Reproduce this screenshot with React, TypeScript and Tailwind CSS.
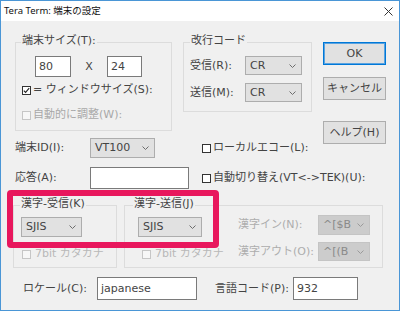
import React from "react";

const Chevron = ({ color = "#6d6d6d" }: { color?: string }) => (
  <svg width="7" height="4" viewBox="0 0 7 4" className="shrink-0">
    <polyline points="0.5,0.5 3.5,3.5 6.5,0.5" fill="none" stroke={color} strokeWidth="1" />
  </svg>
);

const Select = ({ text, cls, disabled }: { text: string; cls: string; disabled?: boolean }) => (
  <div
    className={
      "flex items-center justify-between shrink-0 border pl-[4px] pr-[5px] " +
      (disabled ? "border-[#c4c4c4] bg-[#cccccc] text-[#8a8a8a] " : "border-[#adadad] bg-[#e1e1e1] text-[#444] ") +
      cls
    }
  >
    <span className="leading-[14px]">{text}</span>
    <Chevron color={disabled ? "#9a9a9a" : "#6d6d6d"} />
  </div>
);

const Input = ({ text, cls }: { text: string; cls: string }) => (
  <div className={"flex items-center shrink-0 border border-[#7a7a7a] bg-white pl-[3px] " + cls}>
    <span className="leading-[14px]">{text}</span>
  </div>
);

const Check = ({ checked, disabled }: { checked?: boolean; disabled?: boolean }) => (
  <span
    className={
      "inline-flex items-center justify-center shrink-0 w-[9px] h-[9px] border " +
      (disabled ? "border-[#c6c6c6] bg-[#f7f7f7]" : "border-[#333333] bg-white")
    }
  >
    {checked && (
      <svg width="7" height="7" viewBox="0 0 7 7">
        <polyline points="0.8,3.6 2.6,5.4 6.2,1.2" fill="none" stroke="#222" strokeWidth="1.1" />
      </svg>
    )}
  </span>
);

const Button = ({ text, cls }: { text: string; cls: string }) => (
  <div className={"flex items-center justify-center shrink-0 h-[23px] w-[63px] bg-[#e1e1e1] " + cls}>
    <span className="leading-[14px]">{text}</span>
  </div>
);

export default function App() {
  return (
    <div className="relative w-[400px] h-[311px] overflow-hidden border border-[#4a96d6] bg-[#f0f0f0] flex flex-col font-['DejaVu_Sans','Noto_Sans_CJK_JP',sans-serif] font-normal text-[11px] text-[#444]">
      {/* Title bar */}
      <div className="h-[20px] shrink-0 bg-white flex items-center justify-between pl-[3px] pr-[6px]">
        <span className="text-[9.5px] leading-[12px] text-[#111] font-['Noto_Sans','Noto_Sans_CJK_JP',sans-serif]">Tera Term: 端末の設定</span>
        <svg width="9" height="9" viewBox="0 0 9 9">
          <path d="M0.5 0.5 L8.5 8.5 M8.5 0.5 L0.5 8.5" stroke="#333" strokeWidth="1" />
        </svg>
      </div>

      {/* Top section */}
      <div className="flex pl-[14px]">
        <div className="flex flex-col w-[308px] shrink-0">
          <div className="flex mt-[21px]">
            {/* 端末サイズ group */}
            <div className="flex flex-col w-[157px] h-[89px] shrink-0 border border-[#dcdcdc]">
              <span className="-mt-[10px] ml-[5px] self-start px-[1px] bg-[#f0f0f0] leading-[16px]">端末サイズ(T):</span>
              <div className="flex items-center mt-[7px] ml-[19px]">
                <Input text="80" cls="w-[36px] h-[21px]" />
                <span className="w-[36px] text-center leading-[14px]">X</span>
                <Input text="24" cls="w-[35px] h-[21px]" />
              </div>
              <div className="flex items-center mt-[5px] ml-[6px] h-[16px]">
                <Check checked />
                <span className="ml-[2px] leading-[14px] whitespace-nowrap">= ウィンドウサイズ(S):</span>
              </div>
              <div className="flex items-center mt-[9px] ml-[6px] h-[16px] text-[#a8a8a8]">
                <Check disabled />
                <span className="ml-[2px] leading-[14px] whitespace-nowrap">自動的に調整(W):</span>
              </div>
            </div>
            {/* 改行コード group */}
            <div className="flex flex-col ml-[11px] w-[129px] h-[70px] shrink-0 border border-[#dcdcdc]">
              <span className="-mt-[10px] ml-[6px] self-start px-[1px] bg-[#f0f0f0] leading-[16px]">改行コード</span>
              <div className="flex items-center mt-[7px] ml-[6px] h-[19px]">
                <span className="w-[55px] shrink-0 leading-[14px]">受信(R):</span>
                <Select text="CR" cls="w-[57px] h-[19px]" />
              </div>
              <div className="flex items-center mt-[8px] ml-[6px] h-[19px]">
                <span className="w-[55px] shrink-0 leading-[14px]">送信(M):</span>
                <Select text="CR" cls="w-[57px] h-[19px]" />
              </div>
            </div>
          </div>

          {/* 端末ID row */}
          <div className="flex items-center mt-[7px] h-[20px]">
            <span className="w-[75px] shrink-0 leading-[14px]">端末ID(I):</span>
            <Select text="VT100" cls="w-[65px] h-[20px]" />
            <span className="ml-[47px] flex items-center shrink-0">
              <Check />
              <span className="ml-[2px] leading-[14px] whitespace-nowrap">ローカルエコー(L):</span>
            </span>
          </div>

          {/* 応答 row */}
          <div className="flex items-center mt-[9px] h-[22px]">
            <span className="w-[75px] shrink-0 leading-[14px]">応答(A):</span>
            <Input text="" cls="w-[99px] h-[22px]" />
            <span className="ml-[13px] flex items-center shrink-0">
              <Check />
              <span className="ml-[2px] leading-[14px] whitespace-nowrap">自動切り替え(VT&lt;-&gt;TEK)(U):</span>
            </span>
          </div>
        </div>

        {/* Buttons */}
        <div className="flex flex-col w-[63px] shrink-0">
          <Button text="OK" cls="mt-[21px] border border-[#0078d7] shadow-[inset_0_0_0_1px_#5aa3e0]" />
          <Button text="キャンセル" cls="mt-[12px] border border-[#adadad]" />
          <Button text="ヘルプ(H)" cls="mt-[21px] border border-[#adadad]" />
        </div>
      </div>

      {/* Kanji groups */}
      <div className="flex pl-[12px] mt-[16px]">
        <div className="flex flex-col w-[104px] h-[63px] shrink-0 border border-[#dcdcdc]">
          <span className="-mt-[10px] ml-[6px] self-start px-[1px] bg-[#f0f0f0] leading-[16px]">漢字-受信(K)</span>
          <div className="mt-[5px] ml-[7px]">
            <Select text="SJIS" cls="w-[61px] h-[20px]" />
          </div>
          <div className="flex items-center mt-[10px] ml-[8px] h-[14px] text-[#b8b8b8]">
            <Check disabled />
            <span className="ml-[4px] leading-[14px] whitespace-nowrap">7bit カタカナ</span>
          </div>
        </div>

        <div className="flex flex-col ml-[7px] w-[259px] h-[63px] shrink-0 border border-[#dcdcdc]">
          <span className="-mt-[10px] ml-[8px] self-start px-[1px] bg-[#f0f0f0] leading-[16px]">漢字-送信(J)</span>
          <div className="flex mt-[3px]">
            <div className="flex flex-col ml-[13px] w-[64px] shrink-0">
              <div className="mt-[2px]">
                <Select text="SJIS" cls="w-[64px] h-[20px]" />
              </div>
              <div className="flex items-center mt-[10px] ml-[4px] h-[14px] text-[#b8b8b8]">
                <Check disabled />
                <span className="ml-[4px] leading-[14px] whitespace-nowrap">7bit カタカナ</span>
              </div>
            </div>
            <div className="flex flex-col ml-[36px]">
              <div className="flex items-center h-[20px]">
                <span className="w-[80px] shrink-0 leading-[14px] text-[#adadad]">漢字イン(N):</span>
                <Select text="^[$B" cls="w-[52px] h-[20px]" disabled />
              </div>
              <div className="flex items-center mt-[7px] h-[19px]">
                <span className="w-[80px] shrink-0 leading-[14px] text-[#adadad]">漢字アウト(O):</span>
                <Select text="^[(B" cls="w-[52px] h-[19px]" disabled />
              </div>
            </div>
          </div>
        </div>
      </div>

      {/* Locale row */}
      <div className="flex items-center pl-[22px] mt-[9px] h-[23px]">
        <span className="w-[74px] shrink-0 leading-[14px]">ロケール(C):</span>
        <Input text="japanese" cls="w-[100px] h-[23px]" />
        <span className="ml-[18px] w-[78px] shrink-0 leading-[14px]">言語コード(P):</span>
        <Input text="932" cls="w-[65px] h-[23px]" />
      </div>

      {/* Highlight annotation */}
      <div className="absolute left-[6px] top-[189px] w-[212px] h-[58px] border-[6px] border-[#e8175d] rounded-[4px] pointer-events-none" />
    </div>
  );
}
